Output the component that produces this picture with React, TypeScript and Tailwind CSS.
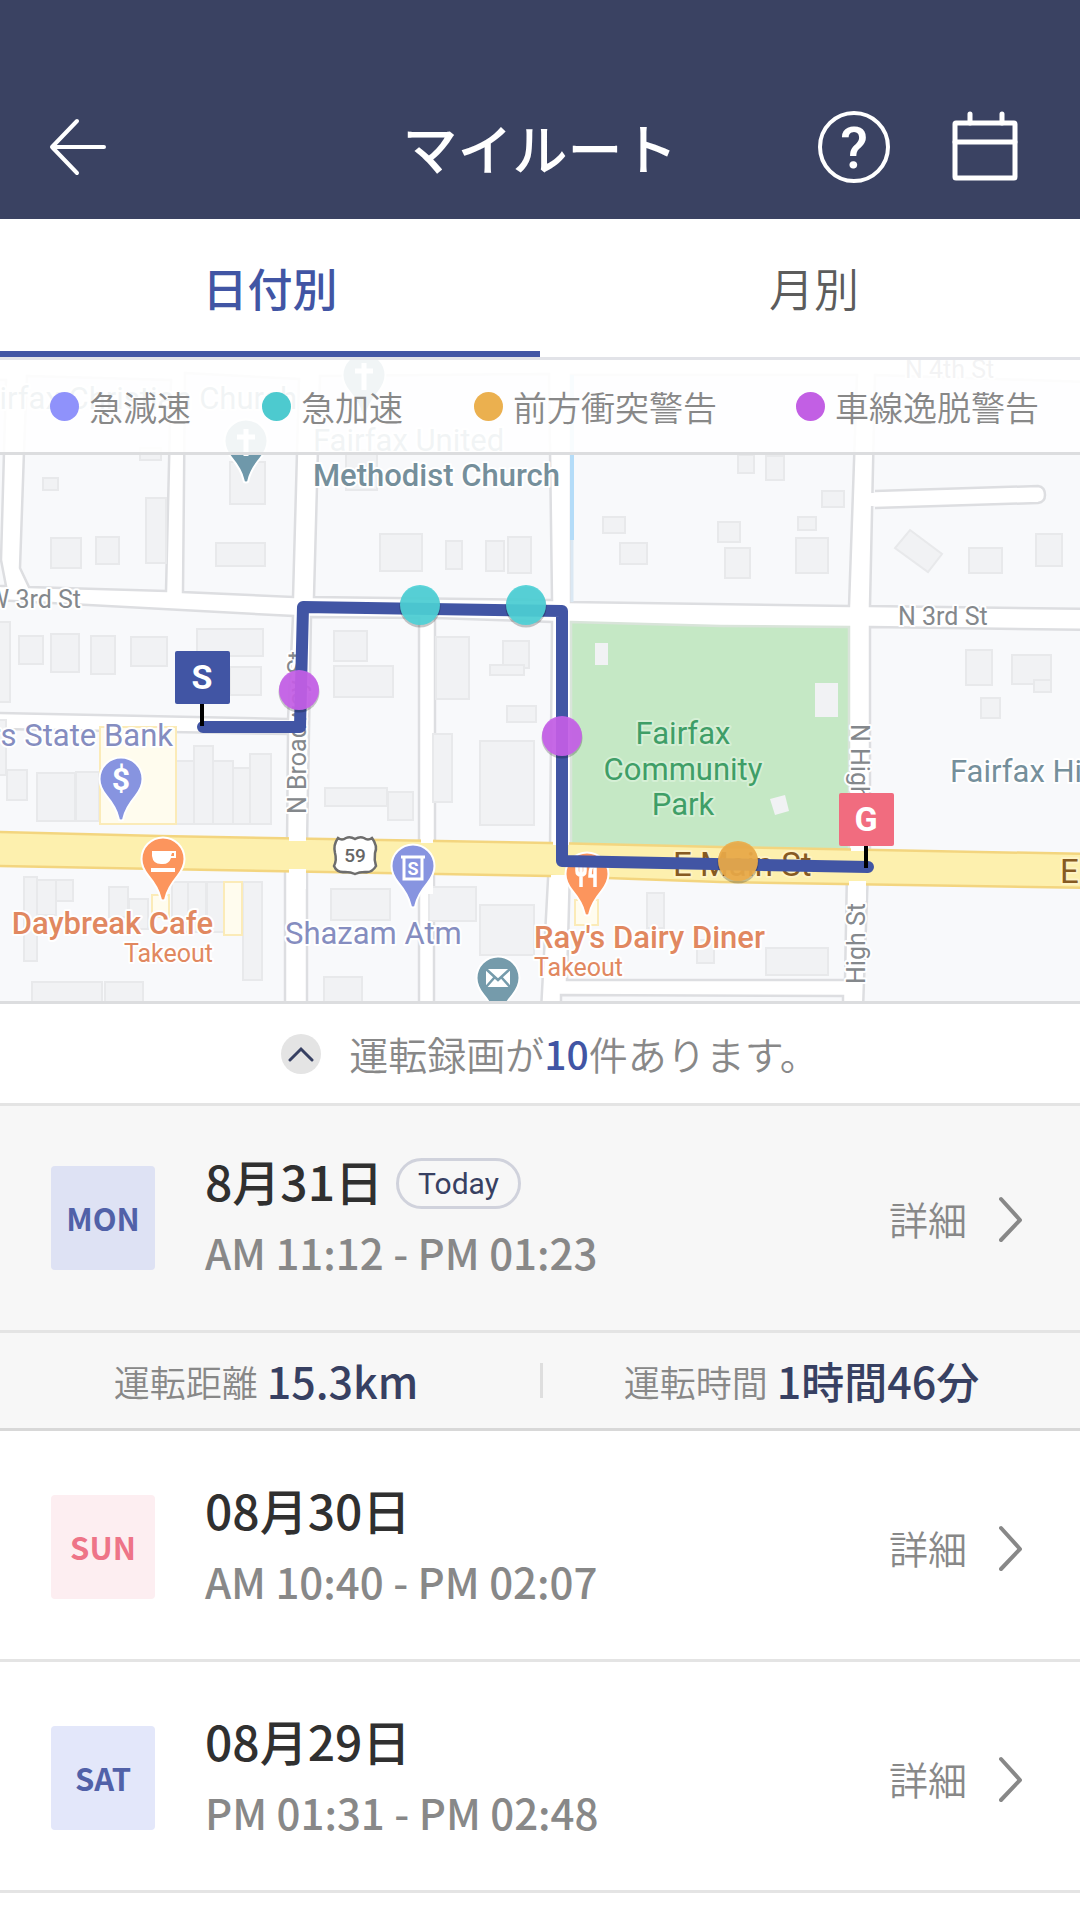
import * as React from "react";
import { clsx } from "clsx";

type Rect = [x: number, y: number, w: number, h: number];

const TABS = [
  { id: "day", label: "日付別" },
  { id: "month", label: "月別" },
];

const LEGEND = [
  { label: "急減速", dot: "bg-[#8f92fb]" },
  { label: "急加速", dot: "bg-[#4dcacf]" },
  { label: "前方衝突警告", dot: "bg-[#ebb04f]" },
  { label: "車線逸脱警告", dot: "bg-[#c25fe4]" },
];

const DRIVES = [
  {
    day: "MON",
    date: "8月31日",
    time: "AM 11:12 - PM 01:23",
    today: true,
    badge: "bg-[#dee2f4] text-[#5161a8]",
    stats: [
      { label: "運転距離", value: "15.3km" },
      { label: "運転時間", value: "1時間46分" },
    ],
  },
  { day: "SUN", date: "08月30日", time: "AM 10:40 - PM 02:07", badge: "bg-[#fdeef1] text-[#ee7488]" },
  { day: "SAT", date: "08月29日", time: "PM 01:31 - PM 02:48", badge: "bg-[#e3e7fa] text-[#5161a8]" },
];

const BLOCKS = [
  "-5,380 6,380 1,560 6,586 -5,586",
  "27,376 171,380 166,591 29,587 20,568 24,452",
  "185,373 299,379 293,597 183,592",
  "320,376 549,374 552,600 314,597",
  "571,375 857,375 849,606 571,602",
  "875,375 1090,382 1090,609 870,606",
  "-5,600 293,616 288,719 -5,713",
  "-5,729 288,734 287,845 -5,845",
  "311,617 419,618 419,845 307,845",
  "435,618 552,622 550,850 435,850",
  "870,627 1090,630 1090,860 870,860",
  "-5,860 285,860 285,1010 -5,1010",
  "307,860 419,860 419,1010 307,1010",
  "434,860 549,860 541,1010 434,1010",
  "570,870 847,870 845,980 567,980",
  "561,995 843,996 843,1010 561,1010",
  "868,870 1090,870 1090,1010 863,1010",
];

const BUILDINGS: Rect[] = [
  [43, 478, 15, 12], [51, 538, 30, 30], [96, 537, 23, 27], [146, 498, 20, 65], [140, 448, 21, 12],
  [230, 462, 35, 42], [216, 543, 49, 23], [19, 636, 24, 28], [51, 634, 28, 38], [91, 636, 24, 38],
  [131, 637, 36, 29], [197, 629, 66, 27], [-4, 622, 14, 80], [230, 667, 31, 28], [334, 631, 33, 30],
  [334, 666, 59, 31], [346, 450, 31, 40], [380, 534, 42, 37], [446, 541, 16, 28], [486, 541, 18, 30],
  [508, 537, 23, 36], [603, 517, 22, 16], [620, 543, 27, 21], [436, 637, 33, 62], [503, 641, 26, 27],
  [490, 665, 34, 10], [738, 455, 16, 18], [766, 456, 18, 24], [822, 491, 22, 16], [798, 517, 18, 13],
  [796, 538, 32, 35], [718, 522, 22, 20], [725, 548, 25, 30], [969, 548, 33, 25], [1036, 534, 26, 32],
  [966, 650, 26, 35], [1012, 655, 39, 29], [1034, 680, 17, 12], [981, 698, 19, 20], [-4, 720, 10, 55],
  [7, 770, 20, 30], [37, 773, 38, 48], [76, 772, 23, 49], [176, 761, 18, 63], [194, 746, 19, 78],
  [213, 761, 20, 63], [233, 768, 17, 56], [250, 754, 21, 70], [325, 788, 62, 18], [388, 792, 25, 28],
  [433, 734, 19, 68], [480, 741, 54, 84], [507, 706, 29, 16], [24, 877, 13, 84], [37, 880, 19, 35],
  [56, 880, 17, 21], [109, 887, 19, 30], [129, 899, 19, 30], [172, 882, 16, 50], [188, 882, 18, 50],
  [207, 882, 18, 50], [243, 882, 19, 98], [331, 889, 59, 31], [324, 977, 38, 30], [32, 982, 70, 25],
  [105, 982, 38, 25], [429, 887, 47, 34], [480, 905, 54, 50], [647, 893, 17, 35], [697, 940, 17, 23],
  [766, 948, 62, 27],
];

const SHOPS: Rect[] = [
  [100, 727, 76, 97],
  [152, 895, 17, 22],
  [224, 882, 18, 53],
  [575, 900, 23, 25],
];

const EVENTS = [
  { x: 299, y: 690, fill: "#c55fe8" },
  { x: 562, y: 736, fill: "#c55fe8" },
  { x: 420, y: 605, fill: "#4dd0d6" },
  { x: 526, y: 605, fill: "#4dd0d6" },
  { x: 738, y: 861, fill: "#ebab49" },
];

function Pin({ x, y, fill, children }: { x: number; y: number; fill: string; children?: React.ReactNode }) {
  return (
    <g transform={`translate(${x} ${y})`}>
      <path
        d="M0 -21.500a21.500 21.500 0 0 1 21.500 21.500c0 7 -3 12 -7 17c-5 6 -10 13 -12 22a2.500 2.500 0 0 1 -5 0c-2 -9 -7 -16 -12 -22c-4 -5 -7 -10 -7 -17a21.500 21.500 0 0 1 21.500 -21.500z"
        fill={fill}
        stroke="#fff"
        strokeWidth="2"
      />
      {children}
    </g>
  );
}

function Flag({ x, y, fill, letter }: { x: number; y: number; fill: string; letter: string }) {
  return (
    <g>
      <rect x={x - 2} y={y + 50} width="4" height="25" fill="#000" />
      <rect x={x - 27} y={y} width="55" height="53" rx="2" fill={fill} />
      <text x={x} y={y + 38} textAnchor="middle" fontSize="34" fontWeight="700" fill="#fff">
        {letter}
      </text>
    </g>
  );
}

function RouteMap() {
  return (
    <svg
      viewBox="0 360 1080 641"
      className="block h-auto w-full font-['Roboto',sans-serif]"
      role="img"
      aria-label="ルート地図"
    >
      <rect x="0" y="360" width="1080" height="641" fill="#fff" />
      <g fill="#f8f9fb" stroke="#dddee1" strokeWidth="2.500">
        {BLOCKS.map((points) => (
          <polygon key={points} points={points} />
        ))}
      </g>
      <path d="M572 375V540" stroke="#b4dcf8" strokeWidth="4" />
      <path d="M572 540V602" stroke="#dbe8f3" strokeWidth="3" />

      {/* cul-de-sac */}
      <path d="M875 491L1038 486q7 1 7 9q0 7 -7 8L875 508" fill="#fff" stroke="#dddee1" strokeWidth="2.500" />
      <rect x="868" y="493" width="10" height="13" fill="#fff" />

      <g fill="#f1f2f4" stroke="#e8e9eb" strokeWidth="2">
        {BUILDINGS.map(([x, y, width, height]) => (
          <rect key={`${x}-${y}`} x={x} y={y} width={width} height={height} />
        ))}
        <polygon points="910,530 942,554 928,572 895,548" />
      </g>
      <g fill="#fffcee" stroke="#fbebb8" strokeWidth="2">
        {SHOPS.map(([x, y, width, height]) => (
          <rect key={`${x}-${y}`} x={x} y={y} width={width} height={height} />
        ))}
      </g>

      {/* park */}
      <polygon points="571,622 720,626 849,627 849,850 571,848" fill="#c5e8c5" stroke="#d9e4da" strokeWidth="2.500" />
      <g fill="#f1f2f4">
        <rect x="595" y="643" width="13" height="22" />
        <rect x="815" y="683" width="23" height="34" />
        <polygon points="770,799 785,795 789,811 775,815" />
      </g>

      {/* main street */}
      <polygon points="-5,832 160,836 550,843 720,847 1090,854 1090,888 720,882 550,876 160,869 -5,866" fill="#fdf0ae" stroke="#f3d57f" strokeWidth="2.500" />
      <g fill="#fff">
        <rect x="289" y="822" width="17" height="19" />
        <rect x="289" y="869" width="17" height="20" />
        <rect x="421" y="822" width="12" height="21" />
        <rect x="421" y="874" width="12" height="20" />
        <rect x="553" y="822" width="16" height="23" />
        <rect x="551" y="875" width="17" height="20" />
        <rect x="851" y="830" width="17" height="21" />
        <rect x="849" y="881" width="17" height="20" />
      </g>

      {/* street names */}
      <g fontSize="25" fill="#84888c" stroke="#fff" strokeWidth="4" paintOrder="stroke" strokeLinejoin="round">
        <text x="81" y="608" textAnchor="end">W 3rd St</text>
        <text x="898" y="625">N 3rd St</text>
        <text x="905" y="378">N 4th St</text>
        <text transform="translate(306 814) rotate(-90)">N Broadway St</text>
        <text transform="translate(851 724) rotate(90)">N High St</text>
        <text transform="translate(865 984) rotate(-90)">High St</text>
      </g>
      <g fontSize="33" fill="#865a22" stroke="#fff3c4" strokeWidth="4" paintOrder="stroke" strokeLinejoin="round">
        <text x="673" y="876">E Main St</text>
        <text x="1060" y="883">E Main St</text>
      </g>

      <g transform="translate(355 855)">
        <path d="M-17 -17q4 3 8 0q4 -2 9 1q5 -3 9 -1q4 3 8 0q6 8 3 15q-1 7 1 13q-4 7 -11 6q-6 0 -10 2q-4 -2 -10 -2q-8 1 -11 -6q3 -6 1 -13q-2 -8 3 -15z" fill="#fff" stroke="#6d6d6d" strokeWidth="2.500" />
        <text y="7" textAnchor="middle" fontSize="19" fontWeight="500" fill="#666">59</text>
      </g>

      <Pin x={246} y={441} fill="#6f98aa">
        <path d="M0 -12V15M-9 -4H9" stroke="#fff" strokeWidth="5" />
      </Pin>
      <Pin x={364} y={375} fill="#6f98aa">
        <path d="M0 -12V15M-9 -4H9" stroke="#fff" strokeWidth="5" />
      </Pin>
      <Pin x={121} y={779} fill="#8794e0">
        <text y="11" textAnchor="middle" fontSize="32" fontWeight="700" fill="#fff">$</text>
      </Pin>
      <Pin x={163} y={859} fill="#fc955d">
        <path d="M-11 -8h24v7h-5q-2 6 -8 6h-2q-8 0 -9 -8z" fill="#fff" />
        <path d="M9 -6h2v3h-3z" fill="#fc955d" />
        <path d="M-12 11h24" stroke="#fff" strokeWidth="4" />
      </Pin>
      <Pin x={413} y={866} fill="#8794e0">
        <path d="M-12 -9h24M-9 -9v22h18v-22" fill="none" stroke="#fff" strokeWidth="3" />
        <text y="9" textAnchor="middle" fontSize="18" fontWeight="700" fill="#fff">S</text>
      </Pin>
      <Pin x={587} y={874} fill="#fc955d">
        <path d="M-10 -11v8q0 4 4 4q4 0 4 -4v-8M-6 -11v24M8 13v-24q-5 3 -5 13h4" fill="none" stroke="#fff" strokeWidth="3.500" />
      </Pin>
      <Pin x={498} y={978} fill="#759bab">
        <rect x="-12" y="-9" width="24" height="18" fill="#fff" />
        <path d="M-12 -9L0 2L12 -9M-12 9L-4 0M12 9L4 0" fill="none" stroke="#759bab" strokeWidth="2.500" />
      </Pin>

      {/* places */}
      <g fontSize="31" stroke="#fff" strokeWidth="4" paintOrder="stroke" strokeLinejoin="round">
        <g fill="#758f9b">
          <text x="297" y="409" textAnchor="end">Fairfax Christian Church</text>
          <text x="313" y="451">Fairfax United</text>
          <text x="313" y="486" fontWeight="500">Methodist Church</text>
          <text x="950" y="782">Fairfax High School</text>
        </g>
        <g fill="#858dc0">
          <text x="173" y="746" textAnchor="end">Farmers State Bank</text>
          <text x="285" y="944">Shazam Atm</text>
        </g>
        <g fill="#e18860" fontWeight="500">
          <text x="213" y="934" textAnchor="end">Daybreak Cafe</text>
          <text x="213" y="962" textAnchor="end" fontSize="25" fontWeight="400">Takeout</text>
          <text x="534" y="948">Ray's Dairy Diner</text>
          <text x="534" y="976" fontSize="25" fontWeight="400">Takeout</text>
        </g>
        <g fill="#3f9e67" stroke="#d5efd5" textAnchor="middle">
          <text x="683" y="744">Fairfax</text>
          <text x="683" y="780">Community</text>
          <text x="683" y="815">Park</text>
        </g>
      </g>

      <path d="M203 727H300L303 607L562 611V861L868 867" fill="none" stroke="#4155a4" strokeWidth="12" strokeLinecap="round" strokeLinejoin="round" />
      {EVENTS.map(({ x, y, fill }) => (
        <g key={`${x}-${y}`}>
          <circle cx={x} cy={y + 2} r="20.500" fill="#000" opacity="0.22" />
          <circle cx={x} cy={y} r="20" fill={fill} opacity="0.92" />
        </g>
      ))}
      <Flag x={202} y={651} fill="#4155a4" letter="S" />
      <Flag x={866} y={793} fill="#f16c7f" letter="G" />
    </svg>
  );
}

function Header() {
  return (
    <header className="grid grid-cols-[1fr_auto_1fr] items-center bg-[#3a4262] px-12 pt-[75px] pb-px text-white">
      <button type="button" aria-label="戻る" className="justify-self-start">
        <svg width="60" height="64" viewBox="4 0 60 64" fill="none" stroke="currentColor" strokeWidth="4" strokeLinecap="round" strokeLinejoin="round">
          <path d="M60 32H8M33 6L8 32L33 58" />
        </svg>
      </button>
      <h1 className="text-[55px] leading-[143px] font-medium">マイルート</h1>
      <div className="flex items-center gap-[60px] justify-self-end pr-3">
        <button type="button" aria-label="ヘルプ">
          <svg width="72" height="72" viewBox="0 0 72 72" className="font-['Roboto',sans-serif]">
            <circle cx="36" cy="36" r="34" fill="none" stroke="currentColor" strokeWidth="4" />
            <text x="36" y="57" textAnchor="middle" fontSize="57" fontWeight="500" fill="currentColor">
              ?
            </text>
          </svg>
        </button>
        <button type="button" aria-label="カレンダー">
          <svg width="70" height="72" viewBox="0 0 70 72" fill="none" stroke="currentColor" strokeWidth="5" strokeLinecap="round">
            <rect x="5" y="12" width="60" height="55" rx="1" />
            <path d="M5 31H65M20 3V12M52 3V12" />
          </svg>
        </button>
      </div>
    </header>
  );
}

function DriveRow({ drive }: { drive: (typeof DRIVES)[number] }) {
  return (
    <li className={clsx("border-b-3", drive.today ? "border-[#d8d8d8] bg-[#f7f7f7]" : "border-[#e4e4e4]")}>
      <div className={clsx("flex items-center px-[51px] pb-[60px]", drive.today ? "pt-[60px]" : "pt-16")}>
        <div className={clsx("grid size-[104px] shrink-0 place-items-center rounded-sm text-[31px] font-bold", drive.badge)}>
          {drive.day}
        </div>
        <div className="-mt-[22px] -mb-[18px] ml-[50px] flex-1 leading-[72px] font-medium">
          <div className="flex items-center gap-[13px]">
            <h2 className="text-[48px] text-[#303030]">{drive.date}</h2>
            {drive.today && (
              <span className="mt-1.5 rounded-full border-3 border-[#d0d2dc] px-[19px] font-['Roboto',sans-serif] text-[30px] leading-[45px] font-normal text-[#374062]">
                Today
              </span>
            )}
          </div>
          <p className="text-[42px] text-[#888]">{drive.time}</p>
        </div>
        <a href="#detail" className="flex items-center gap-8 pr-1 text-[39px] font-[350] text-[#888]">
          詳細
          <svg width="26" height="48" viewBox="0 0 26 48" fill="none" stroke="currentColor" strokeWidth="4" strokeLinecap="round" strokeLinejoin="round">
            <path d="M2 5L21 26L2 46" />
          </svg>
        </a>
      </div>
      {drive.stats && (
        <dl className="grid grid-cols-2 border-t-3 border-[#e4e4e4] py-[30px]">
          {drive.stats.map((stat, i) => (
            <div
              key={stat.label}
              className={clsx("flex h-[35px] items-center justify-center gap-[9px]", i > 0 ? "border-l-3 border-[#dedede] pr-5" : "pr-2")}
            >
              <dt className="text-[36px] font-[350] text-[#888]">{stat.label}</dt>
              <dd className="text-[43px] font-medium text-[#374062]">{stat.value}</dd>
            </div>
          ))}
        </dl>
      )}
    </li>
  );
}

export default function App() {
  const [tab, setTab] = React.useState("day");
  const [open, setOpen] = React.useState(true);

  return (
    <div lang="ja" className="min-h-screen bg-white font-['Noto_Sans_CJK_JP',sans-serif]">
      <Header />

      <nav className="grid grid-cols-2 border-b-3 border-[#e2e3e8]">
        {TABS.map((t) => (
          <button
            key={t.id}
            type="button"
            onClick={() => setTab(t.id)}
            className={clsx(
              "border-b-6 pt-1.5 text-[45px] leading-[126px]",
              tab === t.id ? "border-[#4155a4] font-medium text-[#4155a4]" : "border-transparent pl-2 font-[350] text-[#5c5c5c]",
            )}
          >
            {t.label}
          </button>
        ))}
      </nav>

      <main>
        {open && (
          <section className="relative border-b-3 border-[#dcdddf]">
            <RouteMap />
            <ul className="absolute inset-x-0 top-0 flex h-[95px] items-center gap-[71px] border-b-3 border-[#dcdddf] bg-white/90 pr-[41px] pl-[50px] text-[34px] font-[350] text-[#888]">
              {LEGEND.map((item) => (
                <li key={item.label} className="flex items-center gap-[10px] whitespace-nowrap last:ml-auto">
                  <span className={clsx("size-[29px] rounded-full", item.dot)} />
                  {item.label}
                </li>
              ))}
            </ul>
          </section>
        )}

        <div className="flex h-[102px] items-center justify-center gap-7 border-b-3 border-[#e4e4e4] pl-5 text-[39px] font-[350] text-[#888]">
          <button
            type="button"
            aria-label="地図の表示切替"
            onClick={() => setOpen(!open)}
            className="grid size-10 place-items-center rounded-full bg-[#e4e4e4] text-[#374062]"
          >
            <svg width="26" height="16" viewBox="0 0 26 16" fill="none" stroke="currentColor" strokeWidth="3" strokeLinecap="round">
              <path d="M2 14L13 3L24 14" />
            </svg>
          </button>
          <p>
            運転録画が<span className="font-medium text-[#4155a4]">10</span>件あります。
          </p>
        </div>

        <ul>
          {DRIVES.map((drive) => (
            <DriveRow key={drive.date} drive={drive} />
          ))}
        </ul>
      </main>
    </div>
  );
}
